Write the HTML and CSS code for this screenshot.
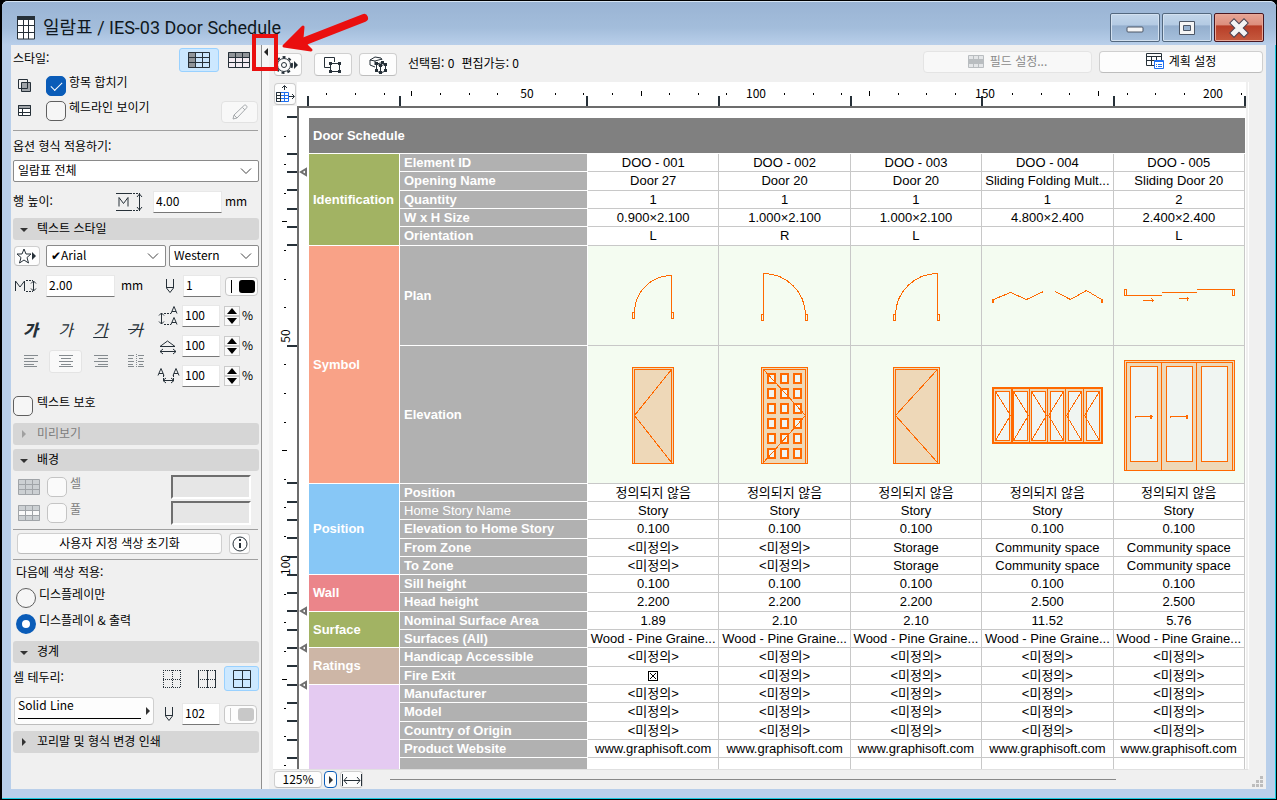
FILE: index.html
```html
<!DOCTYPE html>
<html lang="ko">
<head>
<meta charset="utf-8">
<title>일람표 / IES-03 Door Schedule</title>
<link rel="stylesheet" href="styles.css">
</head>
<body>
<div class="window">
  <header class="titlebar">
    <svg class="app-icon" width="18" height="24" viewBox="0 0 18 24"><path fill="#fff" d="M1 1h16v22H1z"/><path fill="#263038" d="M0 0h18v4H0z"/><path fill="none" stroke="#263038" stroke-width="1" d="M.5 1v22h17V1M6.500 2v21M11.500 2v21M1 9.500h16M1 16.500h16"/></svg>
    <h1>일람표 / IES-03 Door Schedule</h1>
    <div class="win-buttons">
      <button class="win-btn" aria-label="최소화"><svg width="20" height="20"><rect x="2" y="9" width="16" height="5" rx="1" fill="#f5f5f5" stroke="#4c5666"/></svg></button>
      <button class="win-btn" aria-label="최대화"><svg width="20" height="20"><path d="M2.500 3.500h15v13h-15zM6.500 7.500v5h7v-5z" fill="#f5f5f5" fill-rule="evenodd" stroke="#4c5666"/></svg></button>
      <button class="win-btn close" aria-label="닫기"><svg width="20" height="20"><path d="M5 5l10 10M15 5L5 15" stroke="#4a4352" stroke-width="7" stroke-linecap="square"/><path d="M5 5l10 10M15 5L5 15" stroke="#f4f4f4" stroke-width="5" stroke-linecap="square"/></svg></button>
    </div>
  </header>
  <div class="client">
    <aside class="sidebar">
      <div class="row style-row">
        <span class="grow">스타일:</span>
        <button class="tile on" aria-label="세로 머리글"><svg width="24" height="18"><path fill="#c9e4fb" d="M1 1h22v16H1z"/><path fill="#909498" d="M1 1h7v16H1z"/><path fill="none" stroke="#263038" d="M1.500 1.500h21v15h-21zM8.500 1v16M15.500 1v16M1 6.500h22M1 11.500h22"/></svg></button>
        <button class="tile" aria-label="가로 머리글"><svg width="24" height="18"><path fill="#f4ecf2" d="M1 1h22v16H1z"/><path fill="#909498" d="M1 1h22v5H1z"/><path fill="none" stroke="#263038" d="M1.500 1.500h21v15h-21zM8.500 1v16M15.500 1v16M1 6.500h22M1 11.500h22"/></svg></button>
      </div>
      <div class="row check-row">
        <svg class="lead" width="14" height="14"><path fill="none" stroke="#263038" d="M.5 .5h9v9h-9z"/><path fill="#a0a4a8" stroke="#263038" d="M3.500 3.500h9v9h-9z"/><path fill="none" stroke="#263038" d="M3 9.500h6.500V3"/></svg>
        <input type="checkbox" id="merge" checked><label for="merge">항목 합치기</label>
      </div>
      <div class="row check-row head-row">
        <svg class="lead" width="14" height="14"><path fill="#fff" stroke="#263038" d="M.5 1.500h12v10H.5z"/><path fill="#a0a4a8" stroke="#263038" d="M.5 1.500h12v3H.5z"/><path fill="none" stroke="#263038" d="M4.500 5v7M1 8.500h12"/></svg>
        <input type="checkbox" id="headline"><label class="grow" for="headline">헤드라인 보이기</label>
        <button class="soft pencil" aria-label="편집"><svg width="18" height="18" fill="none" stroke="#a5a9ac"><path d="M2 16l1-4L13 2.500c1.500-1.500 4 1 2.500 2.500L6 15zM11.500 4.500l2.500 2.500M3 12l3 3"/></svg></button>
      </div>
      <hr>
      <label class="caption" for="scope">옵션 형식 적용하기:</label>
      <div class="select scope"><select id="scope"><option>일람표 전체</option></select><svg width="12" height="8"><path d="M1 1.500l5 5 5-5"/></svg></div>
      <div class="row height-row">
        <label class="grow" for="rowh">행 높이:</label>
        <svg width="28" height="20" fill="none" stroke="#263038"><path d="M0 1.500h14M0 18.500h14M3 14.500v-9l4.500 6 4.500-6v9"/><path stroke-dasharray="2 1" d="M14 1.500h10M14 18.500h10"/><path d="M23.500 2v16M21 5l2.500-3L26 5M21 15l2.500 3 2.500-3"/></svg>
        <input class="field wide" id="rowh" value="4.00"><span class="unit">mm</span>
      </div>
      <button class="section"><i class="tri down"></i>텍스트 스타일</button>
      <div class="row font-row">
        <button class="soft star" aria-label="즐겨찾기"><svg width="22" height="18" fill="none" stroke="#263038"><path d="M8 2l2 5h5l-4 3.500 1.500 5.500L8 13l-4.500 3L5 10.500 1 7h5z"/><path fill="#263038" stroke="none" d="M16 5l4 4-4 4z"/></svg></button>
        <div class="select face"><select aria-label="글꼴"><option>✔Arial</option></select><svg width="12" height="8"><path d="M1 1.500l5 5 5-5"/></svg></div>
        <div class="select script"><select aria-label="문자 집합"><option>Western</option></select><svg width="12" height="8"><path d="M1 1.500l5 5 5-5"/></svg></div>
      </div>
      <div class="row size-row">
        <svg width="24" height="16" fill="none" stroke="#263038"><path d="M1.500 13V3l4.500 6 4.500-6v10"/><path stroke-dasharray="2 1" d="M12 2.500h7M12 13.500h7"/><path d="M19.500 3v10M17 5.500L19.500 3 22 5.500M17 10.500l2.500 2.500 2.500-2.500"/></svg>
        <input class="field wide" aria-label="글자 크기" value="2.00"><span class="unit">mm</span>
        <svg class="pen" width="10" height="16" fill="none" stroke="#263038"><path d="M1.500 1v9L5 14.500 8.500 10V1M2 9.500h6"/></svg>
        <input class="field" aria-label="펜 번호" value="1">
        <button class="color" aria-label="펜 색상"><i class="ink"></i></button>
      </div>
      <div class="format">
        <div class="letters">
          <button class="b" aria-label="굵게">가</button><button class="i" aria-label="기울임">가</button><button class="u" aria-label="밑줄">가</button><button class="s" aria-label="취소선">가</button>
          <button aria-label="왼쪽"><svg width="16" height="14" stroke="#858b8f"><path d="M1 1.500h14M1 4.500h10M1 7.500h14M1 10.500h10M1 12.500h13"/></svg></button>
          <button class="on" aria-label="가운데"><svg width="16" height="14" stroke="#858b8f"><path d="M1 1.500h14M3 4.500h10M1 7.500h14M3 10.500h10M1 12.500h14"/></svg></button>
          <button aria-label="오른쪽"><svg width="16" height="14" stroke="#858b8f"><path d="M1 1.500h14M5 4.500h10M1 7.500h14M5 10.500h10M2 12.500h13"/></svg></button>
          <button aria-label="양쪽"><svg width="16" height="14" stroke="#858b8f"><path d="M0 1.500h6M0 4.500h5M0 7.500h6M0 10.500h5M0 12.500h6M10 1.500h6M11 4.500h4M10 7.500h6M11 10.500h4M10 12.500h6"/><path stroke-dasharray="1 1" d="M8.500 0v14"/></svg></button>
        </div>
        <div class="scales">
          <div class="scale"><svg width="22" height="20" fill="none" stroke="#263038"><path d="M4.500 7v11M2 9.500L4.500 7 7 9.500M2 15.500L4.500 18 7 15.500M14 7.500l3-7 3 7M15 5.500h4M14 18.500l3-7 3 7M15 16.500h4"/><path stroke-dasharray="2 1" d="M7 7.500h7M7 18.500h7"/></svg><input class="field" aria-label="행간" value="100"><span class="spin"><button aria-label="증가"><i></i></button><button aria-label="감소"><i></i></button></span><span>%</span></div>
          <div class="scale"><svg width="22" height="20" fill="none" stroke="#263038"><path d="M3 10.500L10.500 5 18 10.500zM3 15.500h16M6 13l-3 2.500L6 18M16 13l3 2.500L16 18"/></svg><input class="field" aria-label="너비 비율" value="100"><span class="spin"><button aria-label="증가"><i></i></button><button aria-label="감소"><i></i></button></span><span>%</span></div>
          <div class="scale"><svg width="24" height="20" fill="none" stroke="#263038"><path d="M1 9.500l3-7 3 7M2 7.500h4M16 9.500l3-7 3 7M17 7.500h4M6 14.500h11M9 12l-3 2.500L9 17M14 12l3 2.500-3 2.500"/><path stroke-dasharray="2 1" d="M6.500 9v6M16.500 9v6"/></svg><input class="field" aria-label="자간" value="100"><span class="spin"><button aria-label="증가"><i></i></button><button aria-label="감소"><i></i></button></span><span>%</span></div>
        </div>
      </div>
      <div class="row check-row protect"><input type="checkbox" id="protect"><label for="protect">텍스트 보호</label></div>
      <button class="section dim" disabled><i class="tri right"></i>미리보기</button>
      <button class="section next"><i class="tri down"></i>배경</button>
      <div class="row fill-row">
        <svg width="24" height="18"><path fill="#ccd0d3" stroke="#a0a4a8" d="M1.500 1.500h21v15h-21zM8.500 1v16M15.500 1v16M1 6.500h22M1 11.500h22"/></svg>
        <input type="checkbox" id="cellfill" disabled><label class="grow" for="cellfill">셀</label><span class="well"></span>
      </div>
      <div class="row fill-row">
        <svg width="24" height="18"><path fill="#ccd0d3" d="M1 1h22v16H1z"/><path fill="#fafafa" d="M1 6h22v5H1z"/><path fill="none" stroke="#a0a4a8" d="M1.500 1.500h21v15h-21zM8.500 1v16M15.500 1v16M1 6.500h22M1 11.500h22"/></svg>
        <input type="checkbox" id="pool" disabled><label class="grow" for="pool">풀</label><span class="well"></span>
      </div>
      <hr class="tight">
      <div class="row reset-row"><button class="soft reset">사용자 지정 색상 초기화</button><button class="soft info" aria-label="정보"><svg width="16" height="16" fill="none" stroke="#263038"><circle cx="8" cy="8" r="7"/><path stroke-width="2" d="M8 7v5M8 3v2"/></svg></button></div>
      <hr class="tight">
      <div class="caption colors">다음에 색상 적용:</div>
      <div class="row check-row radio-row"><input type="radio" name="apply" id="screen"><label for="screen">디스플레이만</label></div>
      <div class="row check-row radio-row"><input type="radio" name="apply" id="both" checked><label for="both">디스플레이 &amp; 출력</label></div>
      <button class="section edge"><i class="tri down"></i>경계</button>
      <div class="row border-row">
        <span class="grow">셀 테두리:</span>
        <button class="tile" aria-label="없음"><svg width="18" height="18" fill="none" stroke="#263038" stroke-dasharray="1 1"><path d="M0 .5h18M0 9.500h18M0 17.500h18M.5 0v18M9.500 0v18M17.500 0v18"/></svg></button>
        <button class="tile" aria-label="세로"><svg width="18" height="18" fill="none" stroke="#263038"><path d="M.5 0v18M9.500 0v18M17.500 0v18"/><path stroke-dasharray="1 1" d="M0 .5h18M0 9.500h18M0 17.500h18"/></svg></button>
        <button class="tile on" aria-label="전체"><svg width="18" height="18" fill="none" stroke="#263038"><path d="M.5 .5h17v17H.5zM9.500 0v18M0 9.500h18"/></svg></button>
      </div>
      <div class="row line-row">
        <button class="soft line"><span>Solid Line</span><i class="tri right"></i></button>
        <svg class="pen" width="10" height="16" fill="none" stroke="#263038"><path d="M1.500 1v9L5 14.500 8.500 10V1M2 9.500h6"/></svg>
        <input class="field" aria-label="테두리 펜" value="102">
        <button class="color pale" aria-label="테두리 색상"><i class="ink"></i></button>
      </div>
      <button class="section last"><i class="tri right"></i>꼬리말 및 형식 변경 인쇄</button>
    </aside>
    <button class="collapse" aria-label="패널 접기"></button>
    <main class="main">
      <div class="toolbar">
        <button class="soft gear" aria-label="설정"><svg width="28" height="20" fill="none" stroke="#263038"><circle cx="10" cy="10" r="8" stroke-width="2" stroke-dasharray="3 3"/><circle cx="10" cy="10" r="6.500"/><circle cx="10" cy="10" r="2.500"/><path fill="#263038" stroke="none" d="M20 6l4 4-4 4z"/></svg></button>
        <button class="soft tool" aria-label="평면에서 선택"><svg width="20" height="18" fill="none" stroke="#263038"><path d="M8 11.500H1.500v-10h10V6M7.500 7.500h9v8h-9z"/><path fill="#263038" stroke="none" d="M6 6h3v3H6zM15 6h3v3h-3zM6 14h3v3H6zM15 14h3v3h-3z"/></svg></button>
        <button class="soft tool" aria-label="3D에서 선택"><svg width="20" height="20" fill="none" stroke="#263038"><path d="M7 12l-5-2V5l5-3 6 1 1 2M2 5l5 1 7-2M7 6v4M8.500 9l6-1.500 3 1.500v7l-5 2-4-2zM8.500 9l4 2 5-2M12.500 11v7"/><path fill="#263038" stroke="none" d="M7 7h3v3H7zM13 6h3v3h-3zM16 8h3v3h-3zM7 14h3v3H7zM11 9h3v3h-3zM11 16h3v3h-3zM16 14h3v3h-3z"/></svg></button>
        <span class="counts grow"><span>선택됨: 0</span><span>편집가능: 0</span></span>
        <button class="soft fields" disabled><svg width="17" height="13" fill="#e4e6e8" stroke="#b9bdc0"><path d="M.5 .5h15v12H.5z"/><path fill="#b9bdc0" d="M.5 4.500h15v4H.5zM5.500 0v12M10.500 0v12"/></svg>필드 설정...</button>
        <button class="soft scheme"><svg width="18" height="16" fill="none" stroke="#263038"><path d="M.5 .5h15v12H.5zM0 3.500h16M0 7.500h16M5.500 4v9M10.500 4v9"/><path fill="#fff" stroke="#1e6ff0" d="M8.500 7.500h9v8h-9z"/><path stroke="#1e6ff0" d="M8 8.500h10M10 11.500h1M12 11.500h4M10 13.500h1M12 13.500h4"/></svg>계획 설정</button>
      </div>
      <div class="board">
        <button class="soft corner" aria-label="원점"><svg width="20" height="20" fill="none" stroke="#1e6ff0"><path d="M1.500 8.500h12v9h-12zM1 11.500h12M1 14.500h12M9.500 8v10"/><path stroke="#263038" d="M1.500 8.500v9h4v-9zM1 11.500h5M1 14.500h5M9.500 6V2M7 4l2.500-2.500L12 4M14 12.500h5M17 10l2.500 2.500L17 15"/></svg></button>
        <div class="ruler-x"><svg width="949" height="24" shape-rendering="crispEdges">
          <path fill="none" stroke="#000" d="M29.500 11v2M58.500 11v2M87.500 11v2M114.500 9v5M143.500 11v2M172.500 11v2M200.500 11v2M258.500 11v2M286.500 11v2M315.500 11v2M344.500 9v5M372.500 11v2M401.500 11v2M429.500 11v2M487.500 11v2M516.500 11v2M544.500 11v2M572.500 9v5M601.500 11v2M629.500 11v2M658.500 11v2M715.500 11v2M744.500 11v2M772.500 11v2M801.500 9v5M830.500 11v2M858.500 11v2M887.500 11v2M944.500 11v2"/>
          <path fill="none" stroke="#263038" stroke-width="2" d="M11 14v10M103 14v10M290 14v10M422 14v10M554 14v10M685 14v10M817 14v10M948 14v10"/>
          <g text-anchor="middle"><text x="230" y="16">50</text><text x="459" y="16">100</text><text x="688" y="16">150</text><text x="916" y="16">200</text></g></svg></div>
        <div class="ruler-y"><svg width="24" height="664">
          <path shape-rendering="crispEdges" fill="none" stroke="#000" d="M11 30.500h2M11 58.500h2M11 87.500h2M9 115.500h5M11 144.500h2M11 173.500h2M11 201.500h2M11 258.500h2M11 287.500h2M11 316.500h2M9 344.500h5M11 373.500h2M11 401.500h2M11 430.500h2M11 488.500h2M11 516.500h2M11 545.500h2M9 573.500h5M11 602.500h2M11 630.500h2M11 659.500h2"/>
          <path shape-rendering="crispEdges" fill="none" stroke="#263038" stroke-width="2" d="M14 11h10M14 48h10M14 66h10M14 84h10M14 103h10M14 121h10M14 139h10M14 240h10M14 377h10M14 396h10M14 414h10M14 432h10M14 451h10M14 469h10M14 487h10M14 505h10M14 524h10M14 542h10M14 560h10M14 579h10M14 597h10M14 615h10M14 634h10M14 652h10"/>
          <g text-anchor="middle"><text transform="translate(17 230) rotate(-90)">50</text><text transform="translate(17 459) rotate(-90)">100</text></g></svg></div>
        <div class="sheet">
          <svg class="marks" width="10" height="600" fill="#fff" stroke="#707070" stroke-width="2"><path d="M7 61v6l-5-3zM7 500v6l-5-3zM7 537v6l-5-3zM7 574v6l-5-3z"/></svg>
          <table>
            <colgroup><col class="c-group"><col class="c-name"><col><col><col><col><col></colgroup>
            <thead><tr class="title"><th colspan="7">Door Schedule</th></tr></thead>
            <tbody>
              <tr><th class="g olive" rowspan="5">Identification</th><th>Element ID</th><td>DOO - 001</td><td>DOO - 002</td><td>DOO - 003</td><td>DOO - 004</td><td>DOO - 005</td></tr>
              <tr class="tall"><th>Opening Name</th><td>Door 27</td><td>Door 20</td><td>Door 20</td><td>Sliding Folding Mult...</td><td>Sliding Door 20</td></tr>
              <tr><th>Quantity</th><td>1</td><td>1</td><td>1</td><td>1</td><td>2</td></tr>
              <tr><th>W x H Size</th><td>0.900×2.100</td><td>1.000×2.100</td><td>1.000×2.100</td><td>4.800×2.400</td><td>2.400×2.400</td></tr>
              <tr class="tall"><th>Orientation</th><td>L</td><td>R</td><td>L</td><td></td><td>L</td></tr>
              <tr class="plan"><th class="g coral" rowspan="2">Symbol</th><th>Plan</th>
                <td><svg width="130" height="98"><path d="M44.500 65.500h2v6h-2zM83.500 65.500h2v6h-2zM83.500 65.500v-37A37 37 0 0 0 46.500 65.500"/></svg></td>
                <td><svg width="130" height="98"><path d="M42.500 67.500h2v6h-2zM86.500 67.500h2v6h-2zM44.500 67.500v-41A42 42 0 0 1 86.500 67.500"/></svg></td>
                <td><svg width="130" height="98"><path d="M42.500 67.500h2v6h-2zM86.500 67.500h2v6h-2zM86.500 67.500v-41A42 42 0 0 0 44.500 67.500"/></svg></td>
                <td><svg width="130" height="98"><path d="M10.500 52.500h1v3h-1zM119.500 52.500h1v3h-1zM11.500 52.500l17-7 16 7 17-8M73 44.500l15.500 8 16-9 15 9"/></svg></td>
                <td><svg width="130" height="98"><path d="M10.500 42.500h2v6h-2zM118.500 42.500h2v6h-2zM12 48.500h36M48 45.500h35M83 42.500h36M29 53.500h11M37.500 51.500l2 2-2 2M65 51.500h10M73.500 49.500v4"/></svg></td></tr>
              <tr class="elev"><th>Elevation</th>
                <td><svg width="130" height="136"><path class="w" d="M44.500 20.500h41v96h-41z"/><path d="M46.500 116v-93.500h37v94M83.500 22.500l-37 46 37 47"/></svg></td>
                <td><svg width="130" height="136"><path class="w" d="M42.500 20.500h46v96h-46z"/><path class="p" d="M49 27h7v9h-7zM62 27h7v9h-7zM75 27h7v9h-7zM49 42h7v9h-7zM62 42h7v9h-7zM75 42h7v9h-7zM49 57h7v9h-7zM62 57h7v9h-7zM75 57h7v9h-7zM49 72h7v9h-7zM62 72h7v9h-7zM75 72h7v9h-7zM49 87h7v9h-7zM62 87h7v9h-7zM75 87h7v9h-7zM49 102h7v9h-7zM62 102h7v9h-7zM75 102h7v9h-7z"/><path d="M44.500 116v-93.500h42v94M44.500 22.500l42 46-42 47"/></svg></td>
                <td><svg width="130" height="136"><path class="w" d="M42.500 20.500h46v96h-46z"/><path d="M44.500 116v-93.500h42v94M86.500 22.500l-42 46 42 47"/></svg></td>
                <td><svg width="130" height="136"><path class="w thick" d="M11 41h109v55h-109z"/><path d="M29.500 41v55M30.500 41v55M47.500 41v55M65.500 41v55M83.500 41v55M101.500 41v55"/><path class="g" d="M13.500 44.500h14v49h-14zM31.500 44.500h14v49h-14zM49.500 44.500h14v49h-14zM68.500 44.500h13v49h-13zM86.500 44.500h13v49h-13zM104.500 44.500h13v49h-13z"/><path d="M13.500 44.500l15 24-15 25M31.500 44.500l15 24-15 25M49.500 44.500l15 24-15 25M81.500 44.500l-15 24 15 25M99.500 44.500l-15 24 15 25M117.500 44.500l-15 24 15 25"/></svg></td>
                <td><svg width="130" height="136"><path class="w" d="M10.500 13.500h110v110h-110z"/><path d="M12.500 123v-107.500h106v108M47.500 16v107M82.500 16v107"/><path class="g" d="M16.500 19.500h27v95h-27zM52.500 19.500h26v95h-26zM87.500 19.500h26v95h-26z"/><path d="M21.500 71v-1.500h17M56.500 71v-1.500h17M36.500 68v3h1v-3M72.500 68v3h1v-3"/></svg></td></tr>
              <tr><th class="g sky" rowspan="5">Position</th><th>Position</th><td>정의되지 않음</td><td>정의되지 않음</td><td>정의되지 않음</td><td>정의되지 않음</td><td>정의되지 않음</td></tr>
              <tr><th class="light">Home Story Name</th><td>Story</td><td>Story</td><td>Story</td><td>Story</td><td>Story</td></tr>
              <tr class="tall"><th>Elevation to Home Story</th><td>0.100</td><td>0.100</td><td>0.100</td><td>0.100</td><td>0.100</td></tr>
              <tr><th>From Zone</th><td>&lt;미정의&gt;</td><td>&lt;미정의&gt;</td><td>Storage</td><td>Community space</td><td>Community space</td></tr>
              <tr><th>To Zone</th><td>&lt;미정의&gt;</td><td>&lt;미정의&gt;</td><td>Storage</td><td>Community space</td><td>Community space</td></tr>
              <tr><th class="g rose" rowspan="2">Wall</th><th>Sill height</th><td>0.100</td><td>0.100</td><td>0.100</td><td>0.100</td><td>0.100</td></tr>
              <tr class="tall"><th>Head height</th><td>2.200</td><td>2.200</td><td>2.200</td><td>2.500</td><td>2.500</td></tr>
              <tr><th class="g olive" rowspan="2">Surface</th><th>Nominal Surface Area</th><td>1.89</td><td>2.10</td><td>2.10</td><td>11.52</td><td>5.76</td></tr>
              <tr><th>Surfaces (All)</th><td>Wood - Pine Graine...</td><td>Wood - Pine Graine...</td><td>Wood - Pine Graine...</td><td>Wood - Pine Graine...</td><td>Wood - Pine Graine...</td></tr>
              <tr class="tall"><th class="g tan" rowspan="2">Ratings</th><th>Handicap Accessible</th><td>&lt;미정의&gt;</td><td>&lt;미정의&gt;</td><td>&lt;미정의&gt;</td><td>&lt;미정의&gt;</td><td>&lt;미정의&gt;</td></tr>
              <tr><th>Fire Exit</th><td><svg class="tick" width="12" height="12"><path d="M1.500 1.500h9v9h-9zM3 3l6 6M9 3l-6 6"/></svg></td><td>&lt;미정의&gt;</td><td>&lt;미정의&gt;</td><td>&lt;미정의&gt;</td><td>&lt;미정의&gt;</td></tr>
              <tr><th class="g lilac" rowspan="5"></th><th>Manufacturer</th><td>&lt;미정의&gt;</td><td>&lt;미정의&gt;</td><td>&lt;미정의&gt;</td><td>&lt;미정의&gt;</td><td>&lt;미정의&gt;</td></tr>
              <tr class="tall"><th>Model</th><td>&lt;미정의&gt;</td><td>&lt;미정의&gt;</td><td>&lt;미정의&gt;</td><td>&lt;미정의&gt;</td><td>&lt;미정의&gt;</td></tr>
              <tr><th>Country of Origin</th><td>&lt;미정의&gt;</td><td>&lt;미정의&gt;</td><td>&lt;미정의&gt;</td><td>&lt;미정의&gt;</td><td>&lt;미정의&gt;</td></tr>
              <tr><th>Product Website</th><td>www.graphisoft.com</td><td>www.graphisoft.com</td><td>www.graphisoft.com</td><td>www.graphisoft.com</td><td>www.graphisoft.com</td></tr>
              <tr><th></th><td></td><td></td><td></td><td></td><td></td></tr>
            </tbody>
          </table>
        </div>
      </div>
      <footer class="status">
        <button class="soft zoom">125%</button>
        <button class="soft step" aria-label="확대 메뉴"><i class="tri right"></i></button>
        <button class="soft fit" aria-label="너비 맞춤"><svg width="20" height="12" fill="none" stroke="#263038"><path d="M.5 0v12M19.500 0v12M2 6.500h16M5 3L2 6.500 5 10M15 3l3 3.500L15 10"/></svg></button>
        <div class="track"></div>
        <svg class="grip" width="12" height="12" fill="#bdbdbd"><path d="M9 0h3v3H9zM5 4h3v3H5zM9 4h3v3H9zM1 8h3v3H1zM5 8h3v3H5zM9 8h3v3H9z"/></svg>
      </footer>
    </main>
  </div>
  <div class="callout"></div>
  <svg class="arrow" width="96" height="48" viewBox="0 0 96 48"><path fill="none" stroke="#ea0f0f" stroke-width="8" stroke-linecap="round" d="M86 9L22 34"/><path fill="#ea0f0f" stroke="#ea0f0f" stroke-width="3" stroke-linejoin="round" d="M6 37L25 18l-1 11 5 8 4 4z"/></svg>
</div>
</body>
</html>
```
FILE: styles.css
```css
* { box-sizing: border-box; }
html, body { height: 100%; }
body { margin: 0; background: #000; overflow: hidden; font: 12px/16px "Noto Sans CJK KR", "Noto Sans", sans-serif; color: #000; }
button, input, select { font: inherit; color: inherit; margin: 0; padding: 0; }
button { background: none; border: 0; display: flex; align-items: center; justify-content: center; }
svg { display: block; flex: none; }
.grow { flex: 1; }

.window { position: relative; display: flex; flex-direction: column; height: 100%; padding: 0 10px 10px 9px; border: 1px solid #000; border-left-width: 2px; border-radius: 7px 7px 0 0; background: #b9cfea; box-shadow: inset -1px -1px 0 #17c9de; }
.titlebar { display: flex; align-items: center; gap: 8px; height: 44px; flex: none; margin: 0 -10px 0 -9px; padding: 8px 12px 0 15px; border-radius: 6px 6px 0 0; background: linear-gradient(#9ab4d4, #a3bddb 60%, #b9cfea); border-top: 1px solid #d5e4f3; }
.titlebar h1 { flex: 1; margin: 0; font-family: Roboto, "Noto Sans CJK KR", sans-serif; font-size: 18px; line-height: 28px; font-weight: 400; color: #101820; }
.win-buttons { display: flex; gap: 2px; margin-top: -8px; padding-top: 8px; }
.win-btn { width: 50px; height: 29px; border: 1px solid #53687f; border-radius: 2px; background: linear-gradient(#c3d6ea, #b3cae3 42%, #93aecd 43%, #a7c0dc); box-shadow: inset 0 0 0 1px #d3e1f0; }
.win-btn.close { border-color: #4a1620; background: linear-gradient(#e6a596, #dc8d7c 42%, #b73d27 43%, #c65a3e); box-shadow: inset 0 0 0 1px #e8a898; }

.client { flex: 1; min-height: 0; display: flex; background: #f0f0f0; }
.sidebar { width: 251px; flex: none; padding: 0 2px; border-right: 1px solid #8f8f8f; overflow: hidden; }
.collapse { width: 7px; background: #f6f6f6; align-items: flex-start; padding-top: 3px; }
.collapse::before { content: ""; border: 4px solid transparent; border-left-width: 0; border-right-color: #222; }
.row { display: flex; align-items: center; }
.caption { display: block; }

.soft { background: #fdfdfd; border: 1px solid #cfcfcf; border-bottom-color: #bdbdbd; border-radius: 4px; }
.tile { width: 40px; height: 24px; border-radius: 3px; border: 1px solid transparent; }
.tile.on { background: #cce8ff; border-color: #99d1ff; }
.style-row { height: 29px; }
.style-row span { padding-bottom: 3px; }
.check-row { align-items: flex-start; height: 25px; padding-left: 4px; }
.check-row .lead { margin: 5px 14px 0 1px; }
.check-row label { margin-left: 3px; }
.check-row input { margin-top: 2px; }
input[type=checkbox], input[type=radio] { appearance: none; width: 20px; height: 20px; flex: none; border: 1px solid #5f5f5f; border-radius: 5px; background: #f6f6f6; }
input[type=checkbox]:checked { background: #0a5cb8; border-color: #0a5cb8; }
input[type=checkbox]:checked::after { content: ""; display: block; width: 10px; height: 5px; margin: 5px 0 0 4px; border: solid #fff; border-width: 0 0 1px 1px; transform: rotate(-45deg); }
input[type=checkbox]:disabled { border-color: #c4c4c4; background: #fafafa; }
input[type=radio] { border-radius: 50%; }
input[type=radio]:checked { border: 6px solid #0a5cb8; background: #fff; }
.pencil { width: 37px; height: 22px; margin: 2px 1px 0 0; border-color: #e2e2e2; background: #f8f8f8; }
hr { height: 1px; margin: 6px 1px 7px 0; border: 0; background: #a0a0a0; }

.select { position: relative; height: 22px; }
.select select { appearance: none; width: 100%; height: 100%; padding: 0 20px 2px 4px; border: 1px solid #8a8a8a; border-radius: 2px; background: #fff; }
.select svg { position: absolute; right: 7px; top: 7px; fill: none; stroke: #444; }
.scope { margin-top: 6px; }
.height-row { height: 22px; margin-top: 9px; }
.height-row label { padding-bottom: 2px; }
.field { width: 38px; height: 22px; padding: 0 2px 3px; border: 1px solid #e8e8e8; border-bottom-color: #777; background: #fff; }
.field.wide { width: 69px; }
.unit { width: 37px; padding: 0 0 3px 3px; }
.height-row .field { margin-left: 9px; }
.section { width: 100%; height: 22px; margin-top: 5px; padding: 0 0 2px 7px; justify-content: flex-start; background: #d6d6d6; border-radius: 3px; }
.section .tri { margin-right: 9px; }
.section.dim { margin-top: 7px; color: #7d7d7d; }
.section.next { margin-top: 4px; }
.section.edge { margin-top: 5px; }
.section.last { margin-top: 6px; }
.tri { width: 8px; height: 8px; flex: none; }
.tri.down { border: 4px solid transparent; border-top-color: #333; border-bottom: 0; height: 4px; margin-top: 3px; }
.tri.right { border: 4px solid transparent; border-left-color: #333; border-right: 0; width: 4px; }
.section .tri.right { margin: 2px 11px 0 2px; }
.dim .tri.right { border-left-color: #a0a0a0; }
.font-row { height: 22px; margin-top: 5px; }
.star { width: 26px; height: 20px; margin: 0 6px 0 1px; }
.face { width: 120px; margin-right: 3px; }
.script { flex: 1; }
.size-row { height: 22px; margin-top: 8px; }
.size-row svg:first-child { margin: 0 8px 0 1px; }
.size-row .unit { width: 50px; padding-left: 6px; }
.pen { margin-right: 8px; }
.color { width: 33px; height: 19px; margin-left: 4px; padding: 0 2px 0 5px; justify-content: space-between; background: #fdfdfd; border: 1px solid #c8c8c8; border-radius: 4px; }
.color::before { content: ""; width: 1px; height: 13px; background: #000; }
.ink { width: 16px; height: 13px; border-radius: 3px; background: #000; }
.pale::before, .pale .ink { background: #c8c8c8; }
.format { display: flex; justify-content: space-between; margin-top: 8px; }
.letters { display: grid; grid-template-columns: repeat(4, 35px); grid-template-rows: 32px 32px; margin-top: 8px; align-items: center; }
.letters button { height: 23px; border-radius: 3px; font-size: 16px; line-height: 18px; color: #263038; }
.letters .on { background: #f9f9f9; border: 1px solid #e4e4e4; margin: 0 1px; }
.letters .b { font-weight: 900; font-style: italic; }
.letters .i { font-style: italic; }
.letters .u { text-decoration: underline; font-style: italic; }
.letters .s { text-decoration: line-through; font-style: italic; }
.scales { display: grid; gap: 8px; }
.scale { display: flex; align-items: center; height: 22px; width: 102px; }
.scale svg { width: 24px; margin-right: 1px; }
.scale .field { margin-right: 4px; }
.scale > span:last-child { padding-bottom: 2px; }
.spin { width: 16px; margin-right: 2px; }
.spin button { width: 16px; height: 10px; border: 1px solid #cacaca; background: #fafafa; }
.spin i { border: 5px solid transparent; border-top: 0; border-bottom: 6px solid #000; }
.spin button:last-child i { border-top: 6px solid #000; border-bottom: 0; }
.protect { height: 22px; margin-top: 7px; padding-left: 0; }
.protect label { margin-left: 4px; }
.fill-row { height: 23px; margin-top: 3px; padding: 0 8px 0 4px; color: #7d7d7d; }
.fill-row input { margin-left: 6px; }
.fill-row label { margin: -7px 0 0 3px; }
.section + .fill-row { margin-top: 4px; }
.well { width: 80px; height: 24px; border: 2px solid; border-color: #6e6e6e #fff #fff #6e6e6e; background: #e6e6e6; }
hr.tight { margin: 5px 1px 3px 0; }
.reset-row { height: 21px; padding: 0 9px 0 4px; gap: 7px; }
.reset { flex: 1; height: 21px; padding-bottom: 2px; }
.info { width: 21px; height: 21px; }
.colors { margin: 4px 3px 6px; }
.radio-row { height: 24px; margin-bottom: 2px; padding-left: 3px; }
.border-row { height: 25px; margin-top: 3px; }
.border-row .tile { width: 35px; height: 25px; }
.border-row span { padding-bottom: 4px; }
.line-row { height: 28px; margin-top: 6px; }
.line { width: 140px; height: 28px; margin: 0 10px 0 1px; padding: 0 3px; justify-content: space-between; }
.line span { width: 123px; height: 20px; margin-bottom: 4px; text-align: left; border-bottom: 1px solid #000; line-height: 12px; }
.line-row .pen, .line-row .field, .line-row .color { margin-top: 6px; }

.main { flex: 1; min-width: 0; display: flex; flex-direction: column; padding-left: 4px; }
.toolbar { display: flex; align-items: flex-start; height: 37px; flex: none; padding: 6px 3px 0 1px; }
.gear { width: 28px; height: 23px; margin: 2px 12px 0 0; }
.tool { width: 38px; height: 23px; margin: 2px 7px 0 0; }
.counts { display: flex; gap: 7px; padding: 4px 0 0 4px; }
.fields { width: 169px; height: 22px; gap: 5px; padding-bottom: 2px; color: #8a8a8a; background: #f8f8f8; border-color: #e4e4e4; margin-right: 7px; }
.scheme { width: 164px; height: 22px; gap: 5px; padding-bottom: 2px; }
.board { flex: 1; min-height: 0; display: grid; grid-template: 24px 1fr / 24px 1fr; margin-right: 17px; border-right: 1px solid #fff; padding-right: 2px; border-bottom: 1px solid #e0e0e0; overflow: hidden; }
.corner { width: 22px; height: 22px; margin: 1px; }
.ruler-x, .ruler-y { background: #fff; overflow: hidden; min-height: 0; }
.board text { font-size: 12px; fill: #000; }
.sheet { position: relative; min-height: 0; padding: 10px 1px 0 10px; background: #fff; border: solid #6c6c6c; border-width: 2px 0 0 2px; overflow: hidden; }
.marks { position: absolute; left: 0; top: 0; }
table { width: 100%; table-layout: fixed; border-collapse: separate; border-spacing: 0; font-family: "Liberation Sans", "Noto Sans CJK KR", sans-serif; font-size: 13px; line-height: 16px; }
.c-group { width: 91px; }
.c-name { width: 188px; }
tr { height: 18px; }
tr.tall { height: 19px; }
tr.title { height: 36px; }
tr.plan { height: 100px; }
tr.elev { height: 138px; }
th, td { padding: 0; border: solid #c8c8c8; border-width: 0 1px 1px 0; vertical-align: middle; white-space: nowrap; overflow: hidden; }
td { text-align: center; }
th { padding-left: 4px; text-align: left; color: #fff; background: #b1b1b1; border-color: #fff; }
th.light { font-weight: 400; }
.title th { background: #808080; border-right: 0; }
th.olive { background: #a2b363; }
th.coral { background: #f9a287; }
th.sky { background: #87c7f6; }
th.rose { background: #eb858a; }
th.tan { background: #cdb6a6; }
th.lilac { background: #e4caf1; }
.plan td, .elev td { background: #f4fcf1; }
td svg { fill: none; stroke: #ff6900; shape-rendering: crispEdges; }
td .w { fill: #eed8b8; }
td .g { fill: #f0f5f2; }
td .p { fill: #f0f5f2; stroke-width: 2; }
td .thick { stroke-width: 2; }
td .tick { margin: 0 auto; stroke: #000; }

.status { display: flex; align-items: center; height: 19px; flex: none; padding: 0 3px 0 1px; }
.zoom { width: 48px; height: 17px; margin-right: 2px; padding-bottom: 2px; }
.step { width: 13px; height: 17px; margin-right: 3px; border-color: #0a5cb8; }
.fit { width: 23px; height: 17px; }
.track { width: 726px; height: 1px; margin: 0 auto 0 27px; background: #888; }
.grip { margin-top: 5px; }

.callout { position: absolute; left: 250px; top: 33px; width: 26px; height: 37px; border: 4px solid #ea0f0f; }
.arrow { position: absolute; left: 276px; top: 8px; }
```
